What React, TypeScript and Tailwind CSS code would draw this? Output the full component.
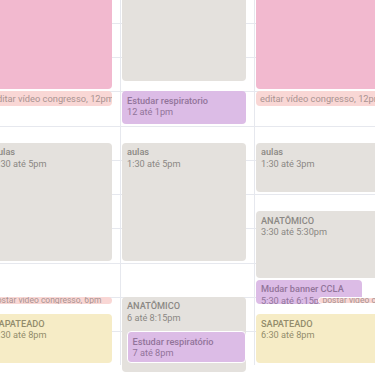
import React from "react";

const HOUR = 34.27;
const BASE = 22.8; // y of the 10am line
const y = (t: number) => BASE + (t - 10) * HOUR;

type Tone = "pink" | "blush" | "gray" | "purple" | "yellow";

type Ev = {
  start: number;
  end: number;
  title?: string;
  time?: string;
  tone: Tone;
  bar?: boolean;
  small?: boolean;
  left?: number;
  width?: number;
  ring?: boolean;
};

const tones: Record<Tone, string> = {
  pink: "bg-[#f2b9cf] text-[#9c7180]",
  blush: "bg-[#f9d7d5] text-[#a99391]",
  gray: "bg-[#e4e1dd] text-[#8b8884]",
  purple: "bg-[#dcbce6] text-[#92749a]",
  yellow: "bg-[#f6ecc6] text-[#938c6c]",
};

const columns: Ev[][] = [
  [
    { start: 8, end: 12, tone: "pink" },
    { start: 12, end: 12.5, tone: "blush", bar: true, title: "editar vídeo congresso, 12pm" },
    { start: 13.5, end: 17, tone: "gray", title: "aulas", time: "1:30 até 5pm" },
    { start: 18, end: 18.25, tone: "blush", bar: true, small: true, title: "postar vídeo congresso, 6pm" },
    { start: 18.5, end: 20, tone: "yellow", title: "SAPATEADO", time: "6:30 até 8pm" },
  ],
  [
    { start: 8, end: 11.75, tone: "gray" },
    { start: 12, end: 13, tone: "purple", title: "Estudar respiratorio", time: "12 até 1pm" },
    { start: 13.5, end: 17, tone: "gray", title: "aulas", time: "1:30 até 5pm" },
    { start: 18, end: 20.25, tone: "gray", title: "ANATÔMICO", time: "6 até 8:15pm" },
    { start: 19, end: 20, tone: "purple", title: "Estudar respiratório", time: "7 até 8pm", left: 5.5, width: 119.5, ring: true },
  ],
  [
    { start: 8, end: 12, tone: "pink" },
    { start: 12, end: 12.5, tone: "blush", bar: true, title: "editar vídeo congresso, 12pm" },
    { start: 13.5, end: 15, tone: "gray", title: "aulas", time: "1:30 até 3pm" },
    { start: 15.5, end: 17.5, tone: "gray", title: "ANATÔMICO", time: "3:30 até 5:30pm" },
    { start: 17.5, end: 18.25, tone: "purple", title: "Mudar banner CCLA", time: "5:30 até 6:15pm", width: 105.5 },
    { start: 18, end: 18.25, tone: "blush", bar: true, small: true, title: "postar vídeo congresso, 6pm", left: 62.5, width: 70, ring: true },
    { start: 18.5, end: 20, tone: "yellow", title: "SAPATEADO", time: "6:30 até 8pm" },
  ],
];

function EventBlock({ ev }: { ev: Ev }) {
  const top = y(ev.start);
  const height = Math.max((ev.end - ev.start) * HOUR - 2, 7.5);

  return (
    <div
      className={`absolute overflow-hidden rounded-[4px] ${tones[ev.tone]} ${
        ev.ring ? "border border-white" : ""
      }`}
      style={{ top, height, left: ev.left ?? 1, width: ev.width ?? 123.5 }}
    >
      {ev.bar ? (
        <p
          className={`whitespace-nowrap px-[4px] ${
            ev.small ? "text-[8.5px]" : "text-[9.3px]"
          }`}
          style={{ lineHeight: `${ev.ring ? height - 2 : height}px` }}
        >
          {ev.title}
        </p>
      ) : (
        ev.title && (
          <div className="whitespace-nowrap px-[5px] pt-[3.5px] text-[9.2px] leading-[11.5px]">
            <p className="font-medium">{ev.title}</p>
            <p>{ev.time}</p>
          </div>
        )
      )}
    </div>
  );
}

function DayColumn({ events }: { events: Ev[] }) {
  return (
    <div className="relative w-[134px] shrink-0 border-l border-[#e6e8ee]">
      <div className="flex flex-col">
        <div className="h-[22.8px]" />
        {Array.from({ length: 10 }).map((_, i) => (
          <div key={i} className="h-[34.27px] border-t border-[#e6e8ee]" />
        ))}
      </div>
      {events.map((ev, i) => (
        <EventBlock key={i} ev={ev} />
      ))}
    </div>
  );
}

export default function App() {
  return (
    <div
      className="h-[372px] w-[375px] overflow-hidden bg-white"
      style={{ fontFamily: "Roboto, 'Noto Sans', sans-serif" }}
    >
      <div className="ml-[-14px] flex">
        {columns.map((events, i) => (
          <DayColumn key={i} events={events} />
        ))}
      </div>
    </div>
  );
}
